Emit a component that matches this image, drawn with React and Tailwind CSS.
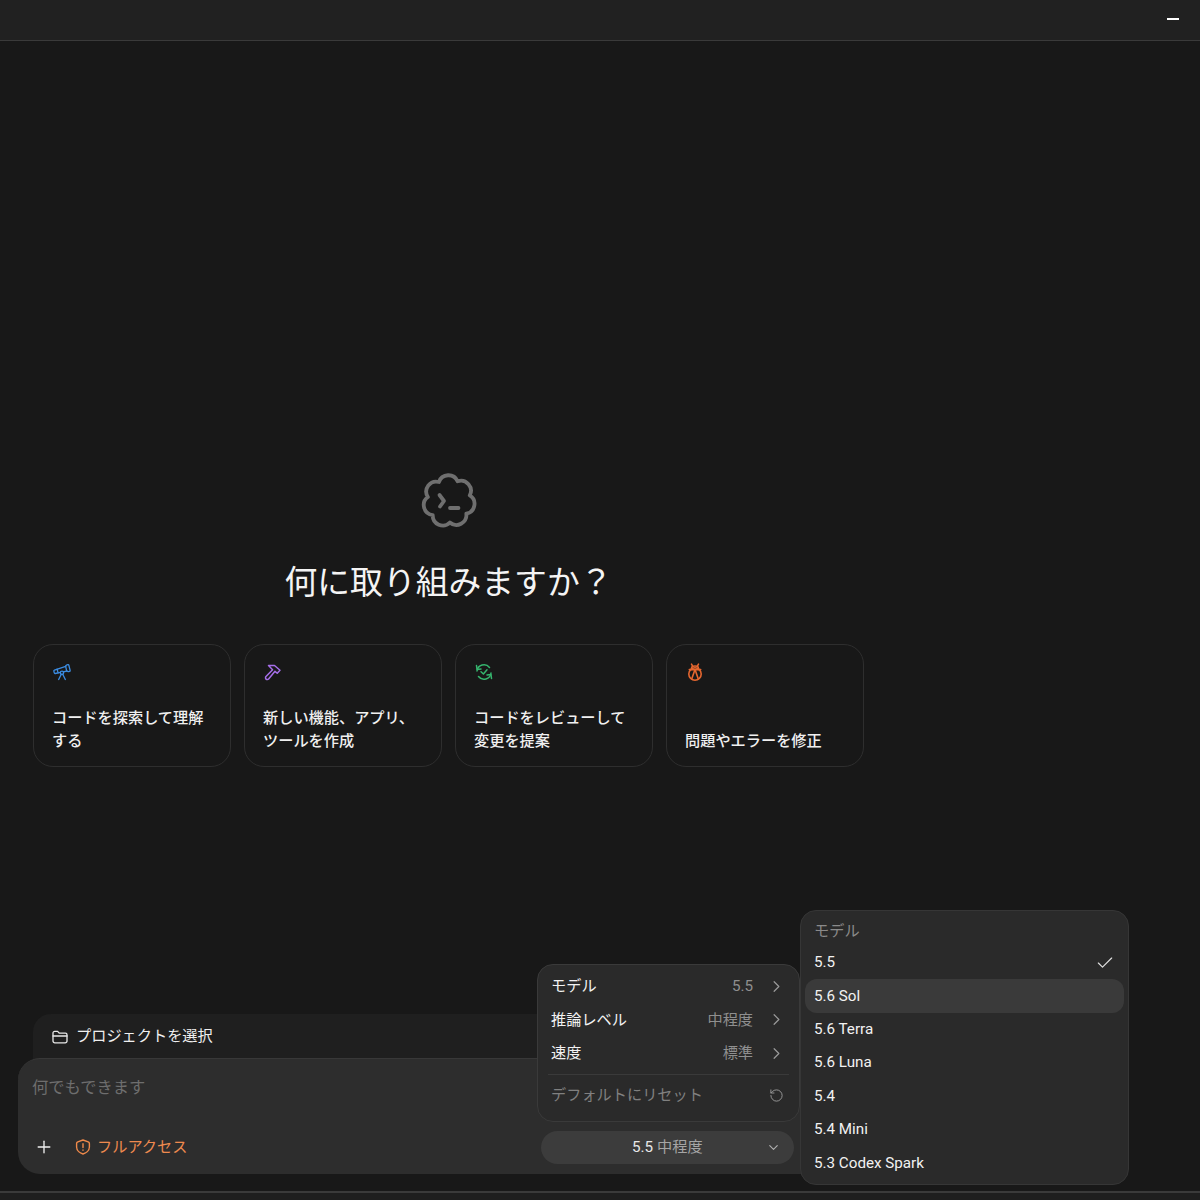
import React from "react";
import { Telescope, Plus, ChevronRight, ChevronDown, Check, RotateCcw } from "lucide-react";

const FONT = { fontFamily: 'Roboto, "Noto Sans CJK JP", sans-serif' };

function cloudPath() {
  const cx = 30, cy = 30, n = 7, r = 21.5;
  const pts = [];
  for (let i = 0; i < n; i++) {
    const a = ((-118 + (i * 360) / n) * Math.PI) / 180;
    pts.push([cx + r * Math.cos(a), cy + r * Math.sin(a)]);
  }
  let d = `M${pts[0][0].toFixed(2)} ${pts[0][1].toFixed(2)}`;
  for (let i = 1; i <= n; i++) {
    const p = pts[i % n];
    d += ` A10 10 0 0 1 ${p[0].toFixed(2)} ${p[1].toFixed(2)}`;
  }
  return d + "Z";
}

function Logo() {
  return (
    <svg width="60" height="60" viewBox="0 0 60 60" fill="none" stroke="#6f6f6f" strokeWidth="3.8" strokeLinecap="round" strokeLinejoin="round">
      <path d={cloudPath()} />
      <path d="M20.5 24 L25 30 L21 35.5" />
      <path d="M31 37 H39.5" />
    </svg>
  );
}

function HammerIcon() {
  return (
    <svg width="18" height="18" viewBox="0 0 18 18" fill="none" stroke="#a56ee8" strokeWidth="1.5" strokeLinejoin="round" strokeLinecap="round">
      <path d="M4.5 2.5 H10.5 L16 7.2 L13.2 10.2 L11 8.2 L4.6 16 A1.6 1.6 0 0 1 2 13.6 L8.6 6.8 L4.5 2.5Z" />
    </svg>
  );
}

function ReviewIcon() {
  return (
    <svg width="18" height="18" viewBox="0 0 18 18" fill="none" stroke="#35b46d" strokeWidth="1.5" strokeLinejoin="round" strokeLinecap="round">
      <path d="M2 8 A7 7 0 0 1 14.5 4.5" />
      <path d="M1.5 2.5 L2 6.5 L6 6" />
      <path d="M16 10 A7 7 0 0 1 3.5 13.5" />
      <path d="M16.5 15.5 L16 11.5 L12 12" />
      <path d="M6 8.8 L8.4 11 L12 6.8" />
    </svg>
  );
}

function BugIcon() {
  return (
    <svg width="18" height="18" viewBox="0 0 18 18" fill="none" stroke="#e4662f" strokeWidth="1.6" strokeLinejoin="round" strokeLinecap="round">
      <path d="M5.5 1.2 L6.8 3.4 M12.5 1.2 L11.2 3.4" />
      <path d="M5.6 6.4 V5 A3.4 2 0 0 1 12.4 5 V6.4" />
      <circle cx="9" cy="11" r="6.2" />
      <path d="M3.3 6.6 H14.7 M9 6.6 L5.8 15.8 M9 6.6 L12.2 15.8" />
    </svg>
  );
}

function ShieldIcon() {
  return (
    <svg width="16" height="16" viewBox="0 0 16 16" fill="none" stroke="#f08a4b" strokeWidth="1.4" strokeLinejoin="round" strokeLinecap="round">
      <path d="M8 1 L13.2 2.8 C14 3.1 14.4 3.6 14.4 4.4 V8 C14.4 11.6 11 14.2 8 15 C5 14.2 1.6 11.6 1.6 8 V4.4 C1.6 3.6 2 3.1 2.8 2.8 Z" />
      <path d="M8 4.8 V8.6 M8 11 V11.2" />
    </svg>
  );
}

function FolderIcon() {
  return (
    <svg width="16" height="16" viewBox="0 0 16 16" fill="none" stroke="#e8e8e8" strokeWidth="1.3" strokeLinejoin="round" strokeLinecap="round" className="mt-[5px]">
      <path d="M1 4 A1.6 1.6 0 0 1 2.6 2.4 H5.6 L7.4 4.2 H13.4 A1.6 1.6 0 0 1 15 5.8 V12 A1.8 1.8 0 0 1 13.2 13.8 H2.8 A1.8 1.8 0 0 1 1 12 Z" />
      <path d="M1 7 H15" />
    </svg>
  );
}

const cards = [
  { icon: <Telescope size={20} color="#3b8be0" strokeWidth={1.6} className="-mt-px" />, lines: ["コードを探索して理解", "する"] },
  { icon: <div className="ml-px"><HammerIcon /></div>, lines: ["新しい機能、アプリ、", "ツールを作成"] },
  { icon: <div className="ml-px"><ReviewIcon /></div>, lines: ["コードをレビューして", "変更を提案"] },
  { icon: <div className="ml-px"><BugIcon /></div>, lines: ["問題やエラーを修正"] },
];

const settings = [
  ["モデル", "5.5"],
  ["推論レベル", "中程度"],
  ["速度", "標準"],
];

const models = ["5.5", "5.6 Sol", "5.6 Terra", "5.6 Luna", "5.4", "5.4 Mini", "5.3 Codex Spark"];

export default function App() {
  return (
    <div style={FONT} className="relative w-[1200px] h-[1200px] overflow-hidden bg-[#181818] text-white flex flex-col">
      <header className="h-[41px] shrink-0 bg-[#212121] border-b border-[#3a3a3a] flex items-center justify-end pr-[21px] pb-[2px]">
        <div className="w-3 h-[2px] bg-white" />
      </header>

      <main className="flex-1 w-[897px] flex flex-col">
        <div className="flex flex-col items-center pt-[430px]">
          <Logo />
          <h1 className="mt-[30px] text-[32.8px] leading-[44px] font-normal text-[#f4f4f4]">何に取り組みますか？</h1>
        </div>

        <div className="mt-[39px] ml-[33px] flex gap-[13px]">
          {cards.map((c, i) => (
            <div key={i} className="w-[198px] h-[123px] rounded-[20px] border border-[#2e2e2e] pl-[18px] pr-2 pt-[18px] pb-[13px] flex flex-col justify-between">
              <div className="h-[18px]">{c.icon}</div>
              <div className="text-[15.2px] leading-[23px] font-medium text-[#f0f0f0] whitespace-nowrap">
                {c.lines.map((l) => (
                  <div key={l}>{l}</div>
                ))}
              </div>
            </div>
          ))}
        </div>

        <div className="mt-auto mb-[17px]">
          <div className="ml-[33px] mr-[18px] h-[60px] -mb-4 rounded-t-[18px] bg-[#1f1f1f] pl-[19px] pt-[10px] flex items-start gap-2">
            <FolderIcon />
            <span className="text-[15.2px] leading-6 text-[#efefef]">プロジェクトを選択</span>
          </div>
          <div className="relative ml-[18px] mr-[18px] h-[116px] rounded-[22px] bg-[#2d2d2d] border-t border-[#383838] pl-[14px] pr-[85px] flex flex-col">
            <div className="pt-[17px] text-[16.3px] leading-6 text-[#6e6e6e]">何でもできます</div>
            <div className="mt-auto mb-[11px] flex items-center">
              <Plus size={20} color="#f0f0f0" strokeWidth={1.6} className="ml-[2px]" />
              <div className="ml-[21px] flex items-center gap-[6px] text-[15.2px] leading-6 text-[#ef8a4f]">
                <ShieldIcon />
                <span>フルアクセス</span>
              </div>
              <div className="ml-auto w-[253px] h-[33px] -mb-[1px] rounded-full bg-[#3c3c3c] flex items-center pl-[91px] pr-[13px] text-[15.2px] text-[#a5a5a5]">
                <span className="text-[#e8e8e8]">5.5</span>
                <span className="ml-[4px]">中程度</span>
                <ChevronDown size={15} color="#b0b0b0" strokeWidth={1.8} className="ml-auto" />
              </div>
            </div>
          </div>
        </div>
      </main>

      <div className="shrink-0 h-[9px] bg-[#1e1e1e] border-t-2 border-[#3a3a3a]" />

      <div className="absolute left-[537px] top-[964px] w-[263px] h-[158px] rounded-[16px] bg-[#2a2a2a] border border-[#3a3a3a] px-[13px] pt-[5px] text-[15.2px]">
        {settings.map(([k, v]) => (
          <div key={k} className="h-[33.3px] flex items-center">
            <span className="text-[#f2f2f2]">{k}</span>
            <span className="ml-auto text-[#8f8f8f]">{v}</span>
            <ChevronRight size={19} color="#9a9a9a" strokeWidth={1.5} className="ml-[14px]" />
          </div>
        ))}
        <div className="mt-[4px] -mx-[3px] border-t border-[#3a3a3a]" />
        <div className="h-[41px] flex items-center text-[#808080]">
          <span>デフォルトにリセット</span>
          <RotateCcw size={15} color="#9a9a9a" strokeWidth={1.5} className="ml-auto mr-[2px]" />
        </div>
      </div>

      <div className="absolute left-[800px] top-[910px] w-[329px] h-[275px] rounded-[16px] bg-[#2a2a2a] border border-[#363636] px-[4px] pt-[8px] text-[15.2px]">
        <div className="h-[27px] pb-[2px] px-[9px] flex items-center text-[#8a8a8a]">モデル</div>
        {models.map((m, i) => (
          <div key={m} className={`h-[33.4px] px-[9px] rounded-[12px] flex items-center text-[#f2f2f2] ${i === 1 ? "bg-[#3a3a3a]" : ""}`}>
            <span>{m}</span>
            {i === 0 && <Check size={20} color="#e0e0e0" strokeWidth={1.4} className="ml-auto" />}
          </div>
        ))}
      </div>
    </div>
  );
}
